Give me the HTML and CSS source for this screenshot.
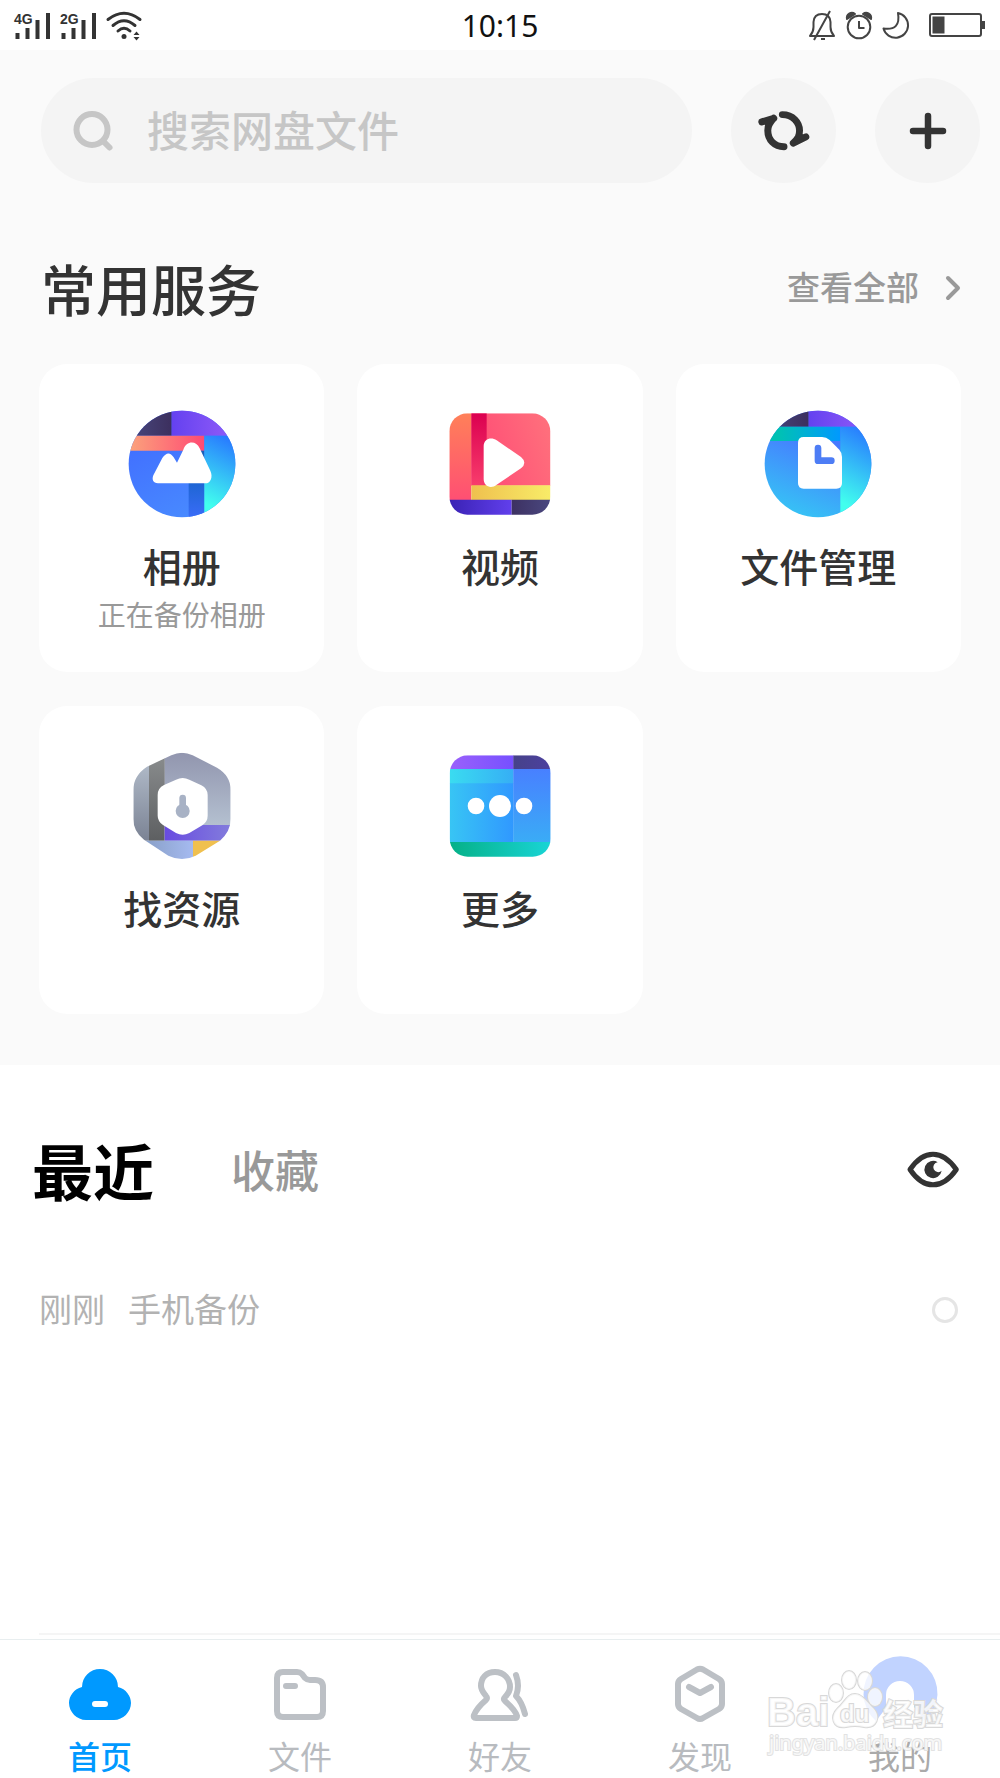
FILE: index.html
```html
<!DOCTYPE html>
<html lang="zh-CN">
<head>
    <meta charset="UTF-8">
    <meta name="viewport" content="width=device-width, initial-scale=1.0">
    <title>网盘</title>
    <link rel="stylesheet" href="styles.css">
</head>
<body>
    <header class="status-bar">
        <div class="status-left">
            <svg class="signal" viewBox="0 0 38 30" aria-hidden="true">
                <text x="0" y="15">4G</text>
                <path d="M3.5 24v6M13.5 19v11M23.5 11v19M34 4v26"/>
            </svg>
            <svg class="signal" viewBox="0 0 38 30" aria-hidden="true">
                <text x="0" y="15">2G</text>
                <path d="M3.5 24v6M13.5 19v11M23.5 11v19M34 4v26"/>
            </svg>
            <svg class="wifi" viewBox="0 0 36 30" aria-hidden="true">
                <path d="M2 10.5Q18 -2 34 10.5M7 16.5Q18 7 29 16.5M12 22Q18 16.5 24 22"/>
                <circle cx="18" cy="27.5" r="2.5"/>
                <path class="fill" d="M27.5 26l3-3.5 3 3.5zM27.5 28l3 3.5 3-3.5z"/>
            </svg>
        </div>
        <time class="clock">10:15</time>
        <div class="status-right">
            <svg class="bell" viewBox="0 0 28 30" aria-hidden="true">
                <path d="M2 26Q5.5 22 5.5 17V12Q6 4 14 4Q22 4 22.5 12V17Q22.5 22 26 26zM22 1L6 30M13 29h4"/>
            </svg>
            <svg class="alarm" viewBox="0 0 28 30" aria-hidden="true">
                <path d="M2 9a5 5 0 0 1 8-5zM26 9a5 5 0 0 0-8-5z" fill="#444"/>
                <circle cx="14" cy="17" r="11.3"/>
                <path d="M14 11v7h5.5"/>
            </svg>
            <svg class="moon" viewBox="0 0 28 30" aria-hidden="true">
                <path d="M16 3A12.5 12.5 0 1 1 1.5 18.5Q19 21 16 3z"/>
            </svg>
            <svg class="battery" viewBox="0 0 57 26" aria-hidden="true">
                <rect x="1" y="2" width="51" height="22" rx="2"/>
                <path d="M3.5 4.5h12v17h-12zM53 9h3v8h-3z" fill="#444" stroke="none"/>
            </svg>
        </div>
    </header>

    <main>
        <section class="services">
            <div class="top-bar">
                <form class="search">
                    <svg class="search-icon" viewBox="0 0 40 40" aria-hidden="true">
                        <circle cx="19" cy="18.5" r="15.5"/>
                        <path d="M30 30l6.5 6.5"/>
                    </svg>
                    <input type="search" placeholder="搜索网盘文件" aria-label="搜索网盘文件">
                </form>
                <button class="round-btn" type="button" aria-label="同步">
                    <svg viewBox="170 145 162 130" width="54" height="43">
                        <path d="M246 162C278 162 298 186 298 210C298 226 294 234 279 248M251 259C222 259 202 238 202 210C202 194 208 186 220 173M184 184L220 173M279 248L317 229" fill="none" stroke="#333" stroke-width="21" stroke-linecap="round" stroke-linejoin="round"/>
                        <path d="M184 184L220 173L201 200zM279 248L317 229L298 215z" fill="#333"/>
                    </svg>
                </button>
                <button class="round-btn" type="button" aria-label="添加">
                    <svg viewBox="0 0 38 38" width="38" height="38">
                        <path d="M19 4v30M4 19h30" stroke="#333" stroke-width="6.5" stroke-linecap="round"/>
                    </svg>
                </button>
            </div>

            <div class="section-head">
                <h2>常用服务</h2>
                <a class="view-all" href="#">查看全部
                    <svg viewBox="0 0 16 26" width="16" height="26" aria-hidden="true">
                        <path d="M3 3l10 10L3 23"/>
                    </svg>
                </a>
            </div>

            <div class="card-grid">
                <a class="card" href="#">
                    <svg class="card-icon" viewBox="84 61 324 324" aria-hidden="true">
                        <defs>
                            <clipPath id="albumClip"><circle cx="246" cy="223" r="160"/></clipPath>
                            <linearGradient id="albumBlue" x1="0" y1="0" x2="0.5" y2="1"><stop offset="0" stop-color="#3f66ff"/><stop offset="1" stop-color="#4889ff"/></linearGradient>
                            <linearGradient id="dark"><stop offset="0" stop-color="#49497f"/><stop offset="1" stop-color="#3c2f5e"/></linearGradient>
                            <linearGradient id="purple"><stop offset="0" stop-color="#6441f0"/><stop offset="1" stop-color="#935df8"/></linearGradient>
                            <linearGradient id="albumRed"><stop offset="0" stop-color="#fba47c"/><stop offset="1" stop-color="#ff4a73"/></linearGradient>
                            <linearGradient id="cyan" x1="0.6" y1="0" x2="0.4" y2="1"><stop offset="0" stop-color="#287bff"/><stop offset="0.9" stop-color="#41ffee"/></linearGradient>
                            <linearGradient id="albumDeep" x1="0" y1="0" x2="0" y2="1"><stop offset="0" stop-color="#1b60b8"/><stop offset="0.5" stop-color="#1f66d5"/><stop offset="1" stop-color="#3a6cf8"/></linearGradient>
                        </defs>
                        <g clip-path="url(#albumClip)">
                            <path d="M84 61h324v324H84z" fill="url(#albumBlue)"/>
                            <path d="M84 61h131v77H84z" fill="url(#dark)"/>
                            <path d="M215 61h193v77H215z" fill="url(#purple)"/>
                            <path d="M84 138h229v45H84z" fill="url(#albumRed)"/>
                            <path d="M266 183h47v202h-47z" fill="url(#albumDeep)"/>
                            <path d="M313 138h95v247h-95z" fill="url(#cyan)"/>
                        </g>
                        <path d="M174 281C159 281 155 269 160 257L187 205Q205 179 221 203L231 219L250 180C259 152 289 152 299 176L331 243C340 263 331 281 316 281z" fill="#fff"/>
                    </svg>
                    <span class="card-title">相册</span>
                    <span class="card-note">正在备份相册</span>
                </a>
                <a class="card" href="#">
                    <svg class="card-icon" viewBox="80 61 324 324" aria-hidden="true">
                        <defs>
                            <clipPath id="videoClip"><rect x="90" y="71" width="303" height="304" rx="54"/></clipPath>
                            <linearGradient id="videoPink" x1="0" y1="0.6" x2="1" y2="0.3"><stop offset="0" stop-color="#ff4a75"/><stop offset="1" stop-color="#ff6f7c"/></linearGradient>
                            <linearGradient id="videoOrange" x1="0" y1="0" x2="0" y2="1"><stop offset="0" stop-color="#ff8059"/><stop offset="1" stop-color="#ff4f73"/></linearGradient>
                            <linearGradient id="videoCrimson" x1="0" y1="0" x2="0" y2="1"><stop offset="0" stop-color="#db0050"/><stop offset="1" stop-color="#f83d6c"/></linearGradient>
                            <linearGradient id="videoYellow"><stop offset="0" stop-color="#efc04e"/><stop offset="1" stop-color="#f8ec68"/></linearGradient>
                            <linearGradient id="videoIndigo"><stop offset="0" stop-color="#3a22b4"/><stop offset="1" stop-color="#613fec"/></linearGradient>
                            <linearGradient id="videoDark"><stop offset="0" stop-color="#3d3162"/><stop offset="1" stop-color="#4a487f"/></linearGradient>
                        </defs>
                        <g clip-path="url(#videoClip)">
                            <path d="M156 71h238v217H156z" fill="url(#videoPink)"/>
                            <path d="M90 71h66v260H90z" fill="url(#videoOrange)"/>
                            <path d="M156 71h46v217h-46z" fill="url(#videoCrimson)"/>
                            <path d="M156 287h238v44H156z" fill="url(#videoYellow)"/>
                            <path d="M90 330h187v46H90z" fill="url(#videoIndigo)"/>
                            <path d="M277 330h117v46H277z" fill="url(#videoDark)"/>
                        </g>
                        <path d="M193 170C193 147 216 141 232 152L305 202Q325 219 305 236L232 285C215 299 193 290 193 268z" fill="#fff"/>
                    </svg>
                    <span class="card-title">视频</span>
                </a>
                <a class="card" href="#">
                    <svg class="card-icon" viewBox="105 61 324 324" aria-hidden="true">
                        <defs>
                            <clipPath id="fileClip"><circle cx="267" cy="223" r="160"/></clipPath>
                            <linearGradient id="fileBlue" x1="0.7" y1="0" x2="0.3" y2="1"><stop offset="0.3" stop-color="#4679ff"/><stop offset="1" stop-color="#36c5f5"/></linearGradient>
                            <linearGradient id="fileTeal"><stop offset="0.2" stop-color="#00c1b4"/><stop offset="1" stop-color="#0099ff"/></linearGradient>
                        </defs>
                        <g clip-path="url(#fileClip)">
                            <path d="M105 61h324v324H105z" fill="url(#fileBlue)"/>
                            <path d="M105 61h134v50H105z" fill="url(#dark)"/>
                            <path d="M239 61h190v50H239z" fill="url(#purple)"/>
                            <path d="M105 111h229v43H105z" fill="url(#fileTeal)"/>
                            <path d="M334 111h95v274h-95z" fill="url(#cyan)"/>
                        </g>
                        <path d="M224 142H279Q292 142 302 151L331 180Q339 189 339 202V280Q339 297 322 297H224Q207 297 207 280V159Q207 142 224 142z" fill="#fff"/>
                        <path d="M267 175v38h40" fill="none" stroke="#4d7df5" stroke-width="20" stroke-linecap="round" stroke-linejoin="round"/>
                    </svg>
                    <span class="card-title">文件管理</span>
                </a>
                <a class="card" href="#">
                    <svg class="card-icon" viewBox="55 66 324 324" aria-hidden="true">
                        <defs>
                            <clipPath id="findClip"><path d="M185 76Q217 61 249 76L322 113Q363 137 363 180V267Q363 304 331 332L258 377Q217 397 176 377L103 329Q71 305 71 267V180Q71 137 112 110z"/></clipPath>
                            <linearGradient id="findGray" x1="0" y1="0" x2="0" y2="1"><stop offset="0" stop-color="#9195ae"/><stop offset="1" stop-color="#b4c0d0"/></linearGradient>
                            <linearGradient id="findSide" x1="0" y1="0" x2="0" y2="1"><stop offset="0" stop-color="#b3bdcb"/><stop offset="1" stop-color="#7b8394"/></linearGradient>
                            <linearGradient id="findDark" x1="0" y1="0" x2="0" y2="1"><stop offset="0" stop-color="#8b8e8f"/><stop offset="1" stop-color="#5d5f61"/></linearGradient>
                            <linearGradient id="findViolet"><stop offset="0" stop-color="#684be0"/><stop offset="1" stop-color="#8580dc"/></linearGradient>
                            <linearGradient id="findBlue"><stop offset="0" stop-color="#8299bd"/><stop offset="1" stop-color="#a5baf0"/></linearGradient>
                        </defs>
                        <g clip-path="url(#findClip)">
                            <path d="M164 66h215v220H164z" fill="url(#findGray)"/>
                            <path d="M55 86h63v246H55z" fill="url(#findSide)"/>
                            <path d="M118 66h47v266h-47z" fill="url(#findDark)"/>
                            <path d="M165 285h214v47H165z" fill="url(#findViolet)"/>
                            <path d="M70 332h180v58H70z" fill="url(#findBlue)"/>
                            <path d="M250 332h129v58H250z" fill="#f0c04f"/>
                        </g>
                        <path d="M199 149Q219 139 239 149L275 166Q294 176 294 195V257Q294 275 278 286L239 309Q219 320 199 309L160 285Q144 274 144 257V195Q144 174 163 165z" fill="#fff"/>
                        <path d="M219 204v40" stroke="#a8b2c5" stroke-width="20" stroke-linecap="round"/>
                        <circle cx="219" cy="243" r="21" fill="#a8b2c5"/>
                    </svg>
                    <span class="card-title">找资源</span>
                </a>
                <a class="card" href="#">
                    <svg class="card-icon" viewBox="49 66 324 324" aria-hidden="true">
                        <defs>
                            <clipPath id="moreClip"><rect x="60" y="76" width="303" height="304" rx="54"/></clipPath>
                            <linearGradient id="moreTop"><stop offset="0" stop-color="#9b61fb"/><stop offset="1" stop-color="#7650ff"/></linearGradient>
                            <linearGradient id="moreDark"><stop offset="0" stop-color="#464289"/><stop offset="1" stop-color="#4c409f"/></linearGradient>
                            <linearGradient id="moreLeft"><stop offset="0" stop-color="#38c5f4"/><stop offset="1" stop-color="#3098ff"/></linearGradient>
                            <linearGradient id="moreCyan"><stop offset="0" stop-color="#3adcf0"/><stop offset="1" stop-color="#36aef5"/></linearGradient>
                            <linearGradient id="moreRight" x1="0" y1="0" x2="0" y2="1"><stop offset="0" stop-color="#4880ff"/><stop offset="1" stop-color="#3aacf6"/></linearGradient>
                            <linearGradient id="moreGreen"><stop offset="0" stop-color="#05b087"/><stop offset="1" stop-color="#19d5d6"/></linearGradient>
                        </defs>
                        <g clip-path="url(#moreClip)">
                            <path d="M60 76h192v41H60z" fill="url(#moreTop)"/>
                            <path d="M60 159h192v178H60z" fill="url(#moreLeft)"/>
                            <path d="M60 117h192v43H60z" fill="url(#moreCyan)"/>
                            <path d="M251 76h112v42H251z" fill="url(#moreDark)"/>
                            <path d="M251 117h112v220H251z" fill="url(#moreRight)"/>
                            <path d="M60 336h303v45H60z" fill="url(#moreGreen)"/>
                        </g>
                        <g fill="#fff">
                            <circle cx="139" cy="228" r="25"/>
                            <circle cx="211" cy="228" r="33"/>
                            <circle cx="283" cy="228" r="25"/>
                        </g>
                    </svg>
                    <span class="card-title">更多</span>
                </a>
            </div>
        </section>

        <section class="recent">
            <div class="recent-head">
                <button class="recent-tab active" type="button">最近</button>
                <button class="recent-tab" type="button">收藏</button>
                <button class="eye-btn" type="button" aria-label="隐藏记录">
                    <svg viewBox="502 62 156 110" width="52" height="37">
                        <path d="M511 117Q542 71 580 71Q618 71 650 117Q618 163 580 163Q542 163 511 117z" fill="none" stroke="#333" stroke-width="15" stroke-linejoin="round"/>
                        <path d="M594 95A26 26 0 1 0 606 121A15 15 0 1 1 594 95z" fill="#333"/>
                    </svg>
                </button>
            </div>
            <label class="recent-row">
                <span>刚刚</span>
                <span>手机备份</span>
                <input type="checkbox">
            </label>
        </section>
    </main>

    <nav class="tab-bar">
        <a class="tab active" href="#">
            <svg viewBox="0 0 62 56" aria-hidden="true">
                <path d="M13 21A18 18 0 0 1 49 21C57 23 62 30 62 37C62 46 54 54 45 54H17C8 54 0 46 0 37C0 30 5 23 13 21z" fill="#0099ff"/>
                <path d="M26 38h10" stroke="#fff" stroke-width="6" stroke-linecap="round"/>
            </svg>
            <span>首页</span>
        </a>
        <a class="tab" href="#">
            <svg viewBox="0 0 62 56" aria-hidden="true">
                <path d="M14 6H28Q31 6 33 8L36 12Q38 14 41 14H46Q54 14 54 21V45Q54 51 48 51H14Q8 51 8 45V12Q8 6 14 6zM17 20h9"/>
            </svg>
            <span>文件</span>
        </a>
        <a class="tab" href="#">
            <svg viewBox="4 0 62 56" aria-hidden="true">
                <path d="M30 6C39 6 45 13 45 21C45 26 42 29 40 31Q38 33 40 35C48 42 51 46 52 50Q52 52 50 52H11Q8 52 9 49C11 44 14 40 21 34Q23 32 21 30C18 26 16 24 16 20C16 12 21 6 30 6zM51 9Q55 20 51 30Q57 36 60 48"/>
            </svg>
            <span>好友</span>
        </a>
        <a class="tab" href="#">
            <svg viewBox="0 0 62 56" aria-hidden="true">
                <path d="M28 3.5Q31 2 34 3.5L50 13Q53 15 53 18V38Q53 41 50 43L34 52Q31 54 28 52L12 43Q9 41 9 38V18Q9 15 12 13zM20 21l11 6 11-6"/>
            </svg>
            <span>发现</span>
        </a>
        <a class="tab avatar" href="#">
            <svg viewBox="0 0 62 56" aria-hidden="true">
                <path d="M7 55A37 37 0 1 1 56 55L45 41V29A14 14 0 0 0 17 29V42z" fill="#c1d3ff"/>
            </svg>
            <span>我的</span>
        </a>
        <svg class="watermark" viewBox="0 0 190 92" aria-hidden="true">
            <g class="paw">
                <ellipse cx="75" cy="25" rx="7" ry="9"/>
                <ellipse cx="88" cy="12" rx="7" ry="9"/>
                <ellipse cx="104" cy="13" rx="7" ry="9"/>
                <ellipse cx="114" cy="29" rx="7" ry="9"/>
                <path d="M94 26C101 26 106 34 112 40C121 49 115 61 103 59Q94 57 85 59C72 61 68 49 77 40C84 34 86 26 94 26z"/>
            </g>
            <text class="brand" x="6" y="58">Bai</text>
            <text class="du" x="79" y="54">du</text>
            <text class="brand cn" x="122" y="57">经验</text>
            <text class="site" x="8" y="82">jingyan.baidu.com</text>
        </svg>
    </nav>
</body>
</html>
```

FILE: styles.css
```css
:root {
    --text-color: #333;
    --muted-color: #999;
    --tab-color: #bcc0c5;
    --primary-color: #09f;
    --panel-color: #fafafa;
    --field-color: #f4f4f4;
}

* {
    box-sizing: border-box;
}

body {
    margin: 0;
    min-height: 100vh;
    display: flex;
    flex-direction: column;
    background: #fff;
    color: var(--text-color);
    font-family: "Noto Sans", "Noto Sans CJK SC", sans-serif;
}

a {
    color: inherit;
    text-decoration: none;
}

button {
    border: none;
    padding: 0;
    background: none;
    font-family: inherit;
    cursor: pointer;
}

svg {
    display: block;
    overflow: visible;
}

/* 状态栏 */
.status-bar {
    height: 50px;
    padding: 0 14px;
    display: grid;
    grid-template-columns: 1fr auto 1fr;
    align-items: center;
}

.status-left,
.status-right {
    display: flex;
    align-items: center;
    gap: 8px;
}

.status-left svg {
    margin-bottom: 2px;
}

.status-right {
    justify-content: flex-end;
    gap: 9px;
}

.signal {
    width: 38px;
    height: 30px;
}

.signal text {
    font: bold 14px "Liberation Sans", sans-serif;
    fill: #333;
}

.signal path {
    stroke: #333;
    stroke-width: 4;
}

.wifi {
    width: 36px;
    height: 30px;
    fill: #333;
}

.wifi path {
    fill: none;
    stroke: #333;
    stroke-width: 3;
    stroke-linecap: round;
}

.wifi .fill {
    fill: #333;
    stroke: none;
}

.status-right svg {
    height: 30px;
    fill: none;
    stroke: #444;
    stroke-width: 2;
    stroke-linejoin: round;
}

.bell,
.alarm,
.moon {
    width: 28px;
}

.status-right .battery {
    width: 57px;
    height: 26px;
    margin-left: 10px;
}

.clock {
    padding-top: 2px;
    color: #111;
    font-size: 30px;
    line-height: 48px;
}

/* 常用服务 */
.services {
    padding: 28px 39px 51px;
    background: var(--panel-color);
}

.top-bar {
    display: flex;
    gap: 39px;
    margin-right: -19px;
    margin-left: 2px;
}

.search {
    flex: 1;
    min-width: 0;
    height: 105px;
    padding: 0 32px;
    display: flex;
    align-items: center;
    gap: 34px;
    border-radius: 53px;
    background: var(--field-color);
}

.search-icon {
    flex: none;
    width: 40px;
    height: 40px;
    fill: none;
    stroke: #c6c6c6;
    stroke-width: 6;
    stroke-linecap: round;
}

.search input {
    flex: 1;
    min-width: 0;
    padding: 0;
    border: none;
    outline: none;
    background: none;
    color: var(--text-color);
    font-family: inherit;
    font-size: 42px;
    font-weight: 500;
}

.search input::placeholder {
    color: #c6c6c6;
    opacity: 1;
}

.round-btn {
    flex: none;
    width: 105px;
    height: 105px;
    display: flex;
    align-items: center;
    justify-content: center;
    border-radius: 50%;
    background: var(--field-color);
}

.section-head {
    display: flex;
    align-items: flex-start;
    justify-content: space-between;
    margin: 67px 0 34px;
    padding-left: 2px;
}

h2 {
    margin: 0;
    font-size: 55px;
    font-weight: 500;
    line-height: 80px;
}

.view-all {
    display: flex;
    align-items: center;
    gap: 26px;
    color: var(--muted-color);
    font-size: 33px;
    font-weight: 500;
    line-height: 76px;
}

.view-all path {
    fill: none;
    stroke: var(--muted-color);
    stroke-width: 4;
    stroke-linecap: round;
    stroke-linejoin: round;
}

.card-grid {
    display: grid;
    grid-template-columns: repeat(3, 1fr);
    grid-auto-rows: 1fr;
    gap: 34px 33px;
}

.card {
    padding: 46px 10px 37px;
    display: flex;
    flex-direction: column;
    align-items: center;
    border-radius: 28px;
    background: #fff;
}

.card-icon {
    width: 108px;
    height: 108px;
}

.card-title {
    margin-top: 23px;
    font-size: 39px;
    font-weight: 500;
    line-height: 52px;
}

.card-note {
    margin-top: 2px;
    color: var(--muted-color);
    font-size: 28px;
    line-height: 40px;
}

/* 最近 */
main {
    flex: 1;
    margin-bottom: 4px;
    display: flex;
    flex-direction: column;
}

main::after {
    content: "";
    height: 2px;
    margin-left: 39px;
    background: #f5f5f5;
}

.recent {
    flex: 1;
    padding: 68px 41px 0 32px;
}

.recent-head {
    display: flex;
    align-items: flex-start;
    gap: 77px;
}

.recent-tab {
    color: var(--muted-color);
    font-size: 44px;
    font-weight: 500;
    line-height: 76px;
}

.recent-tab.active {
    color: #000;
    font-size: 61px;
    font-weight: 700;
    line-height: 80px;
}

.eye-btn {
    height: 72px;
    margin-left: auto;
}

.recent-row {
    margin-top: 70px;
    padding: 0 1px 0 7px;
    display: flex;
    align-items: center;
    gap: 23px;
    color: #b2b2b2;
    font-size: 33px;
    line-height: 54px;
}

.recent-row input {
    appearance: none;
    width: 26px;
    height: 26px;
    margin: 0 0 0 auto;
    border: 3px solid #e5e5e5;
    border-radius: 50%;
}

/* 底部导航 */
.tab-bar {
    position: relative;
    height: 139px;
    padding-top: 26px;
    display: grid;
    grid-template-columns: repeat(5, 1fr);
    border-top: 1px solid #e8eeef;
}

.tab {
    display: flex;
    flex-direction: column;
    align-items: center;
    gap: 12px;
    color: #b8bbbf;
    font-size: 32px;
    line-height: 46px;
}

.tab svg {
    width: 62px;
    height: 56px;
    fill: none;
    stroke: var(--tab-color);
    stroke-width: 6;
    stroke-linecap: round;
    stroke-linejoin: round;
}

.tab.active {
    color: var(--primary-color);
    font-weight: 500;
}

.tab.active svg,
.tab.avatar svg {
    stroke: none;
}

.avatar {
    color: #aaa;
}

/* 水印 */
.watermark {
    position: absolute;
    right: 49px;
    bottom: 18px;
    width: 190px;
    height: 92px;
    pointer-events: none;
}

.watermark text,
.paw {
    fill: #fff;
    fill-opacity: 0.75;
    stroke: #d8d8d8;
    stroke-width: 2;
    paint-order: stroke;
}

.brand {
    font: bold 40px "Liberation Sans", sans-serif;
}

.brand.cn {
    font: bold 30px "Noto Sans CJK SC", sans-serif;
}

.du {
    font: bold 24px "Liberation Sans", sans-serif;
}

.watermark .site {
    font: 20px "Noto Sans", sans-serif;
    stroke: #e2e2e2;
}
```
